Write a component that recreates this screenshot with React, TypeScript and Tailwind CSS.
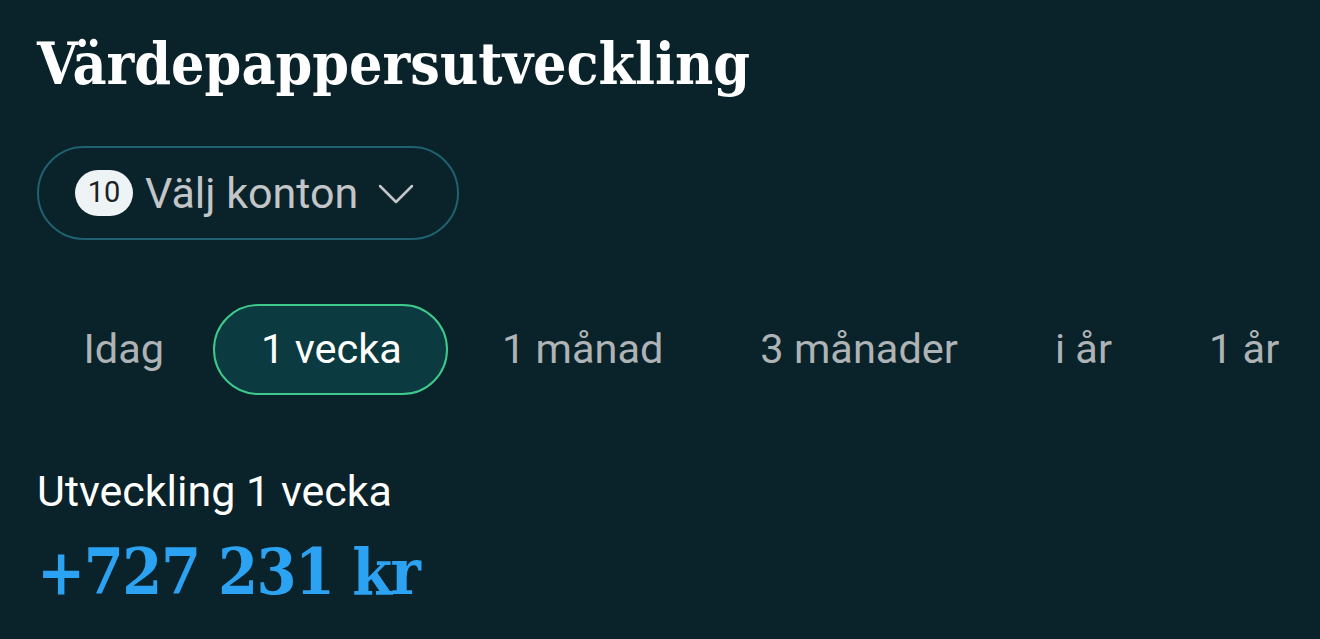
import React from "react";

const slab = { fontFamily: '"DejaVu Serif Condensed", "DejaVu Serif", serif' };

export default function App() {
  const tabs = ["Idag", "1 vecka", "1 månad", "3 månader", "i år", "1 år"];
  return (
    <div className="w-[1320px] h-[639px] bg-[#0a2229] overflow-hidden pl-[37px]" style={{ fontFamily: 'Roboto, "Noto Sans", sans-serif' }}>
      <h1 className="pt-[25px] text-white font-bold text-[58.5px] leading-[78px] whitespace-nowrap" style={slab}>
        Värdepappersutveckling
      </h1>
      <div className="mt-[43px] w-[422px] h-[94px] rounded-full border-[2.5px] border-[#1f6170] flex items-center pl-[36px]">
        <span className="w-[58px] h-[46px] shrink-0 rounded-full bg-[#eef3f5] text-[#1a2226] text-[29px] flex items-center justify-center">10</span>
        <span className="ml-[12px] text-[43px] text-[#c3c6c8] whitespace-nowrap">Välj konton</span>
        <svg className="ml-[20px] mt-[2px] shrink-0" width="36" height="22" viewBox="0 0 36 22" fill="none">
          <path d="M2 3 L18 19 L34 3" stroke="#c3c6c8" strokeWidth="2.5" strokeLinecap="round" strokeLinejoin="round" />
        </svg>
      </div>
      <div className="mt-[64px] -ml-[2px] flex items-center whitespace-nowrap">
        {tabs.map((t) =>
          t === "1 vecka" ? (
            <div key={t} className="h-[91px] shrink-0 pl-[46.5px] pr-[44.5px] mr-[5px] rounded-full border-[2.5px] border-[#3ec88a] bg-[#0b3a40] flex items-center text-[41.5px] text-white">
              {t}
            </div>
          ) : (
            <div key={t} className="h-[91px] shrink-0 px-[48.5px] flex items-center text-[41.5px] text-[#aeb3b5]">
              {t}
            </div>
          )
        )}
      </div>
      <div className="mt-[68px] text-[43px] text-white leading-[56px] whitespace-nowrap">Utveckling 1 vecka</div>
      <div className="mt-[15px] text-[64px] font-bold tracking-[-1.5px] text-[#2ba2f2] leading-[76px] whitespace-nowrap" style={slab}>+727 231 kr</div>
    </div>
  );
}
